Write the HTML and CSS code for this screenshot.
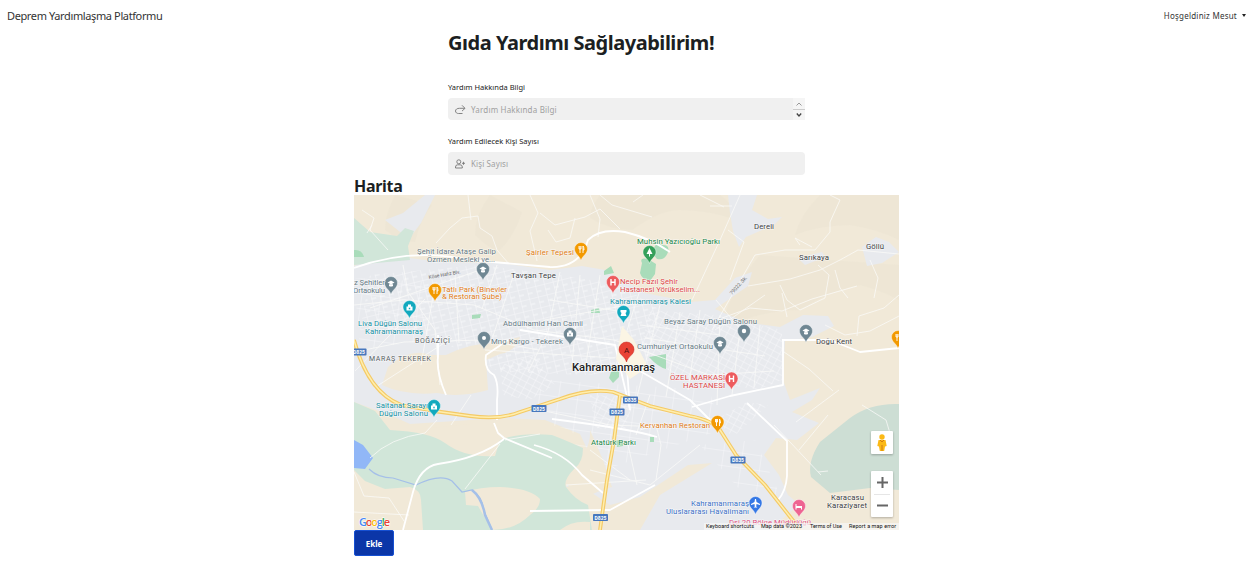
FILE: index.html
```html
<!DOCTYPE html>
<html lang="tr">
<head>
<meta charset="utf-8">
<title>Deprem Yardımlaşma Platformu</title>
<link rel="stylesheet" href="styles.css">
</head>
<body>
<header class="navbar">
  <a class="brand">Deprem Yardımlaşma Platformu</a>
  <a class="user">Hoşgeldiniz Mesut<span class="caret"></span></a>
</header>
<main>
  <form class="form">
    <h1>Gıda Yardımı Sağlayabilirim!</h1>
    <label>Yardım Hakkında Bilgi</label>
    <div class="field first">
      <svg class="icon" viewBox="0 0 12 12"><path d="M10.800 5.300H5.500C3.200 5.300 1.500 6.300 1.500 8s1.500 2.500 3 2.500H8.500M8 2.300l3 3-3 2.800"/></svg>
      <span class="placeholder">Yardım Hakkında Bilgi</span>
      <span class="spin"><svg viewBox="0 0 12 22"><path class="up" d="M3.500 7.500L6 5l2.500 2.500"/><path class="rule" d="M0 11.500h12"/><path class="down" d="M3.800 15.500L6 18l2.200-2.500"/></svg></span>
    </div>
    <label>Yardım Edilecek Kişi Sayısı</label>
    <div class="field second">
      <svg class="icon" viewBox="0 0 12 12"><circle cx="4.800" cy="3.800" r="2"/><path d="M1.500 10V9a2.200 2.200 0 0 1 2.200-2.200h2.400A2.200 2.200 0 0 1 8.300 9v1zM9.500 3.800v3M8 5.300h3"/></svg>
      <span class="placeholder short">Kişi Sayısı</span>
    </div>
  </form>
  <section class="map-section">
    <h2>Harita</h2>
    <svg class="map" viewBox="354 195 545 335">
      <defs>
        <pattern id="blocks-a" width="9" height="11" patternUnits="userSpaceOnUse" patternTransform="rotate(-14)"><path d="M0 0H9M0 0V11M0 6H5" class="street"/></pattern>
        <pattern id="blocks-b" width="7" height="6" patternUnits="userSpaceOnUse" patternTransform="rotate(28)"><path d="M0 0H7M0 0V6" class="street"/></pattern>
        <pattern id="blocks-c" width="19" height="15" patternUnits="userSpaceOnUse" patternTransform="rotate(8)"><path d="M0 0H19M0 0V15" class="street"/></pattern>
        <path id="pin" d="M0 10.500C-1 6-6.500 4-6.500-1a6.500 6.500 0 0 1 13 0C6.500 4 1 6 0 10.500z"/>
        <g id="cap"><path d="M-3.500-1.500L0-3.500l3.500 2L0 .500zM-2 .200V2Q0 3 2 2V.200" class="glyph"/></g>
        <g id="fork"><path d="M-2-4V-1h2V-4M-1-4V3M2-4V3M2-4Q3-3 3 0H2" class="glyph-line"/></g>
        <path id="hospital" d="M-2-4V2.500M2-4V2.500M-2-.7H2" class="glyph-h"/>
        <g id="hall"><path d="M-3 2.500V-1.500L-1.500-1.500V-3.500h3v2H3v4z" class="glyph"/><circle cy=".5" r="1"/></g>
        <rect id="shield" x="-7.500" y="-3.500" width="15" height="7" rx=".8" class="shield"/>
      </defs>
      <rect x="354" y="195" width="545" height="335" class="land"/>
      <path class="relief" d="M395 195Q385 215 385 230 400 242 415 242 420 220 432 205zM490 195Q475 215 475 235 490 250 500 250 515 235 522 212zM600 195Q590 208 590 218 610 230 632 230 660 210 680 210 710 210 735 220 735 205 720 195zM820 195Q800 215 795 235 820 225 850 225 880 230 899 240V195zM760 255Q730 290 720 330 760 310 800 310 830 290 860 285 880 290 899 300V265L830 260z"/>
      <path class="urban" d="M354 266Q382 252 410 258L440 262 500 263 550 270 582 266 605 270 632 285 645 293 690 302 715 300 735 278 752 272 748 286 715 309 745 322 780 327 803 315 828 316 834 326 812 337 785 341 783 380 790 400 820 388 812 400 792 412 819 423 797 440 776 438 764 455 779 475 788 495 800 505 790 512 770 530H640L660 495 712 463 688 465 640 497 610 505 580 485 566 487 590 455 580 434 545 420 500 418 410 424 390 415 354 402z"/>
      <path class="urban" d="M728 195h29l-5 15 16 9 14-2-8 8-28 12-7 10-6-16-3-18zM862 247l14-10 13 5 10 10-17 11-15 3zM798 258l24-6 3 5-20 8zM385 220l18-7 22-18h10l-14 28-12 16z"/>
      <path fill="url(#blocks-a)" d="M370 275L480 265 560 275 620 285 660 310 650 365 590 375 500 372 430 335 360 330z"/>
      <path fill="url(#blocks-b)" d="M650 310L715 315 782 330V380L758 390 675 375 640 350zM500 365L535 355 555 385 530 400 503 395zM590 395L635 397 625 430 595 428zM715 420L747 402 768 405 733 437z"/>
      <path fill="url(#blocks-c)" d="M354 278L430 282 428 340 360 350zM545 380L710 390 720 430 590 475 535 400zM700 445L755 440 780 495 740 490z"/>
      <path class="land" d="M388 367Q410 347 430 355L446 355Q470 343 495 343L520 337Q515 352 500 354L486 360 488 390Q460 398 437 393 405 396 382 385zM396 422L430 428 470 424H545Q575 428 578 440 560 455 540 450L490 455 460 454Q430 440 416 432zM590 430Q592 450 566 479 570 495 580 500 600 490 612 487L603 460z"/>
      <path class="forest" d="M354 402L375 411 390 430Q430 432 445 443 465 458 495 456L500 440Q520 432 552 435 565 440 583 448 583 462 575 468 563 480 566 487 575 500 588 505L592 530H354z"/>
      <path class="land" d="M354 470L365 481 385 489 410 487Q421 490 421 500L423 530H354zM465 492Q480 487 500 487 530 488 540 499 540 508 530 515 515 530 492 530L478 506 466 505zM560 530q12-10 30-8v8z"/>
      <path class="forest dark" d="M899 404Q870 403 850 418L820 442Q807 462 811 477L830 493 870 488 899 490z"/>
      <path class="forest" d="M354 218L370 232 397 236 405 228 414 231 408 246 410 260 354 265z"/>
      <path class="park" d="M354 250q8-1 10 7h-10zM654 248q2-6 9-3 7 0 5 7-3 9-11 7-4-4-3-11zM642 263q-3-6 6-4l8 5-1 10-5 7q-8-1-10-8zM604 271l7-5 3 7-10 2zM649 357l17-3v15q-8-2-17-12zM611 372l8-3v8l-6 6-4-5zM616 440l7 1v5l-6 1zM591 310l8-2 1 5h-9zM472 315l9-1-1 4-8 1zM650 437h4v5h-4z"/>
      <path class="water" d="M354 440l9 5 10 13-8 11-11-1z"/>
      <path class="river" d="M369 469Q378 478 393 478L416 485Q440 473 452 481L462 492 472 490Q482 496 484 511L492 530"/>
      <path class="river wide" d="M472 490Q482 498 485 515L492 530"/>
      <g class="roads thin">
        <path d="M362 210l12 8-4 12 18 20M372 225l-5 8M436 243l14-15 12-10 16-2 2 12 12 8 5 14 12 14M468 195l3 25M530 195l8 18-8 18 7 30M540 213l15 12 30-8 15-8 20 20M548 230l8 12 14-4 5-20M590 195l10 24-2 18M643 195l-10 7M600 195l12 10 40 12M710 206h22M700 195l24 12M740 195L720 240 692 300M712 330L755 255 785 250 815 250 830 232V222L840 200M728 230l16 12-14 38M812 247L795 238 800 245M765 295L715 330M748 286L790 279 820 270 840 260 858 250 899 254M780 285L787 300 800 310 825 298 829 275 818 265M835 270l5 18 8 10M870 260l8 18-4 20M899 295l-15 13-25 8-2 20"/>
        <path d="M722 318l28-10 32 3 30-12 45-13M787 317l-5-24M825 325l20 10 25-4 29-15M784 352l25 17 24 22M839 390l-43 32M799 450l29-35M774 425l47 50M716 300l25 30M354 305l50-5 70 5 60 25 80 10 95 35 65-4M354 352l50-10 80-2 55 10M403 265l5 27 27 38 5 55M435 285l-14 80M455 273l4 70M497 265l-15 44M515 271l-22 65M560 272l-12 60-20 40M580 275l-8 90M600 275l-15 95M640 290l-24 75M660 305L635 405M680 312l-14 85M700 310l-12 80M720 315l-3 90M740 330l-8 65M760 325l-6 62M355 371l70-72M374 388l78-50M480 270l-110 38M640 325l80 10M645 338l120 18M545 320l100-18M550 300l80 13M485 350l130 8M650 395l-14 40M540 410l70 15 55 2M590 450l40 30M627 440l10 45M640 430l16-5 5 20-5 35M590 470l60 15 50-40M354 512l55 3M354 472l10 24 25 2 15 23M500 444l-35 45M471 395l-20 30M566 485l80-5"/>
        <path d="M370 458Q390 438 425 433L437 420M505 440L540 434M830 195l10 5M862 405l24 15 6 20M818 472l10-1"/>
      </g>
      <g class="roads main">
        <path d="M354 268Q410 247 470 260L550 267Q580 268 588 240Q600 228 625 232Q650 238 670 252"/>
        <path d="M438 335v22q-2 15 8 38M508 340l-22 15q-2 15 8 20 5 9 3 25v20M494 423l4 10 6 5 48 20M504 439Q480 458 438 464 420 467 413 492L403 530M640 371L690 400 715 425M783 341V385L730 396 692 407M520 330l95 15 15 65M747 403l40 38v35q-1 15-9 24M625 340l5 70"/>
        <path d="M534 445Q565 453 582 475L603 493M552 419q80 10 105 18M530 511l80-1 45-25M782 340h48l30 12 39-4"/>
      </g>
      <path class="downtown" d="M622 326l12 14 14 27-18 12-14-20z"/>
      <g class="highway-edge"><path d="M354 340Q368 392 401 405L434 411 470 416Q500 420 520 412L560 399Q590 388 613 392L650 406 690 416Q712 420 720 430L736 455 765 485 795 523 800 530M620 395L614 440 607 480 600 530"/></g>
      <g class="highway"><path d="M354 340Q368 392 401 405L434 411 470 416Q500 420 520 412L560 399Q590 388 613 392L650 406 690 416Q712 420 720 430L736 455 765 485 795 523 800 530M620 395L614 440 607 480 600 530"/></g>
      <g class="routes"><use href="#shield" x="359" y="352"/><text x="359" y="354">D825</text><use href="#shield" x="539" y="408.500"/><text x="539" y="410.500">D825</text><use href="#shield" x="630.500" y="400"/><text x="630.500" y="402">D835</text><use href="#shield" x="617" y="412"/><text x="617" y="414">D825</text><use href="#shield" x="738" y="460"/><text x="738" y="462">D835</text><use href="#shield" x="600.500" y="517.500"/><text x="600.500" y="519.500">D825</text></g>
      <g class="pins gray">
        <use href="#pin" x="483" y="270"/><use href="#cap" x="483" y="270"/>
        <use href="#pin" x="391" y="284"/><use href="#cap" x="391" y="284"/>
        <use href="#pin" x="484" y="339"/><circle cx="484" cy="338" r="2" class="glyph"/>
        <use href="#pin" x="570" y="335"/><use href="#hall" x="570" y="334"/>
        <use href="#pin" x="720" y="344"/><use href="#cap" x="720" y="344"/>
        <use href="#pin" x="744" y="332"/><circle cx="744" cy="331" r="2.200" class="glyph"/>
        <use href="#pin" x="806" y="332"/><use href="#cap" x="806" y="332"/>
      </g>
      <g class="pins orange">
        <use href="#pin" x="581" y="250"/><use href="#fork" x="581" y="250"/>
        <use href="#pin" x="435" y="291"/><use href="#fork" x="435" y="291"/>
        <use href="#pin" x="717.500" y="423"/><use href="#fork" x="717.500" y="423"/>
        <use href="#pin" x="898" y="338"/><use href="#fork" x="898" y="338"/>
      </g>
      <g class="pins teal">
        <use href="#pin" x="409.500" y="308"/><use href="#hall" x="409.500" y="308"/>
        <use href="#pin" x="434" y="407"/><use href="#hall" x="434" y="407"/>
        <use href="#pin" x="623.500" y="313"/><path class="glyph" d="M620.500 310h6v2l-1 1 1 3h-6l1-3-1-1z"/>
      </g>
      <g class="pins green"><use href="#pin" x="649.500" y="253"/><path class="glyph" d="M649.500 248l3 6H650v2.500h-1V254h-2.500z"/></g>
      <g class="pins coral"><use href="#pin" x="613" y="283"/><use href="#hospital" x="613" y="283"/><use href="#pin" x="731.500" y="379.500"/><use href="#hospital" x="731.500" y="379.500"/></g>
      <g class="pins blue"><use href="#pin" x="755.500" y="504"/><path class="glyph" d="M755 499h1l.5 3 3.500 2v1l-3.500-1-.3 2.500 1.200 1h-3.800l1.200-1-.3-2.500-3.500 1v-1l3.500-2z"/></g>
      <g class="pins pink"><use href="#pin" x="799" y="507"/><path class="glyph" d="M795.500 504h1v2h5.500v3.500h-1V508h-4.500v1.500h-1z"/></g>
      <path class="marker" d="M626.500 362C625 356 619 355 619 349.500a7.500 7.500 0 0 1 15 0C634 355 628 356 626.500 362z"/>
      <text class="marker-letter" x="626.500" y="353">A</text>
      <g class="label slate">
        <text x="417" y="254" textLength="79">Şehit İdare Ataşe Galip</text><text x="427" y="262" textLength="68">Özmen Mesleki ve...</text>
        <text x="354" y="285" textLength="31">z Şehitler</text><text x="353" y="293" textLength="32">Ortaokulu</text>
        <text x="503" y="326" textLength="80">Abdülhamid Han Camii</text><text x="491" y="343.500" textLength="72">Mng Kargo - Tekerek</text>
        <text x="664" y="323.500" textLength="93">Beyaz Saray Düğün Salonu</text><text x="637" y="349" textLength="76">Cumhuriyet Ortaokulu</text>
      </g>
      <g class="label orange-text"><text x="526" y="255" textLength="48">Şairler Tepesi</text><text x="442" y="291.500" textLength="65">Tatlı Park (Binevler</text><text x="442" y="299" textLength="60">&amp; Restoran Şube)</text><text x="640" y="428" textLength="70">Kervanhan Restoran</text></g>
      <g class="label teal-text"><text x="358" y="326" textLength="64">Liva Düğün Salonu</text><text x="365" y="334" textLength="58">Kahramanmaraş</text><text x="376" y="408" textLength="52">Saltanat Sarayı</text><text x="379" y="416" textLength="49">Düğün Salonu</text><text x="610" y="304" textLength="81">Kahramanmaraş Kalesi</text></g>
      <g class="label green-text"><text x="637" y="243.500" textLength="83">Muhsin Yazıcıoğlu Parkı</text><text x="591" y="444.500" textLength="45">Atatürk Parkı</text></g>
      <g class="label red-text"><text x="620" y="284" textLength="58">Necip Fazıl Şehir</text><text x="620" y="291.500" textLength="80">Hastanesi Yörükselim...</text><text x="670" y="380" textLength="55">ÖZEL MARKASİ</text><text x="683" y="388" textLength="42">HASTANESİ</text></g>
      <g class="label blue-text"><text x="691" y="505.500" textLength="58">Kahramanmaraş</text><text x="666" y="513.500" textLength="83">Uluslararası Havalimanı</text></g>
      <text class="label pink-text" x="729" y="524.500" textLength="82">Dsi 20.Bölge Müdürlüğü</text>
      <g class="label place"><text x="511" y="278" textLength="45">Tavşan Tepe</text><text x="754" y="229" textLength="20">Dereli</text><text x="799" y="260" textLength="30">Sarıkaya</text><text x="866" y="249" textLength="18">Göllü</text><text x="816" y="344" textLength="36">Doğu Kent</text><text x="831" y="500" textLength="33">Karacasu</text><text x="827" y="508" textLength="40">Karaziyaret</text></g>
      <g class="label district"><text x="415" y="343" textLength="35">BOĞAZİÇİ</text><text x="369" y="361" textLength="62">MARAŞ TEKEREK</text></g>
      <text class="city" x="572" y="371" textLength="83" lengthAdjust="spacingAndGlyphs">Kahramanmaraş</text>
      <text class="road-name" transform="translate(429 279) rotate(-10)" textLength="32">Köse Hafız Blv.</text><text class="road-name" transform="translate(732 295) rotate(-48)" textLength="23">79022. Sk.</text>
      <rect x="704" y="523" width="195" height="7" class="credit-bg"/>
      <g class="credit"><text x="706" y="528" textLength="48">Keyboard shortcuts</text><text x="761" y="528" textLength="41">Map data ©2023</text><text x="810" y="528" textLength="32">Terms of Use</text><text x="849" y="528" textLength="47">Report a map error</text></g>
      <text class="google" x="359" y="526" textLength="31"><tspan fill="#4285f4">G</tspan><tspan fill="#ea4335">o</tspan><tspan fill="#fbbc04">o</tspan><tspan fill="#4285f4">g</tspan><tspan fill="#34a853">l</tspan><tspan fill="#ea4335">e</tspan></text>
      <g class="control"><rect x="871" y="431" width="22" height="23" rx="1"/><rect x="871" y="471" width="22" height="46" rx="1"/></g>
      <path d="M874 494.500h16" stroke="#e6e6e6"/><path d="M877 482.500h11M882.500 477v11M877 505.500h11" stroke="#666" stroke-width="2"/>
      <g fill="#fbb916"><circle cx="882" cy="437" r="2.700"/><path d="M878.500 440h7l1.200 6-1.700.5-.8 4.500h-4.400l-.8-4.500-1.700-.5z"/></g><path d="M880 440l2 2 2-2M882 445v6" stroke="#d17b12" fill="none"/>
    </svg>
    <button class="submit" type="button">Ekle</button>
  </section>
</main>
</body>
</html>
```
FILE: styles.css
```css
* { box-sizing: border-box; }
body { margin: 0; background: #fff; color: #1c1f22; font-family: "Noto Sans", "Open Sans", sans-serif; }
.navbar { height: 32px; padding: 0 7px 2px; display: flex; align-items: center; justify-content: space-between; }
.brand { font-size: 11px; color: #333; letter-spacing: -.38px; }
.user { font-size: 8px; color: #333; letter-spacing: .23px; display: flex; align-items: center; gap: 5px; }
.caret { border: 2.5px solid transparent; border-top: 3px solid #222; border-bottom: 0; }
.form { width: 357px; margin-left: 448px; display: flex; flex-direction: column; }
h1 { margin: 0; font-size: 20px; line-height: 22px; height: 50px; letter-spacing: -.47px; white-space: nowrap; }
label { font-size: 7.500px; line-height: 10px; height: 16px; white-space: nowrap; color: #222; }
.field { display: flex; align-items: center; gap: 5px; padding-left: 6px; background: #f0f0f0; border-radius: 4px; color: #a0a0a0; font-size: 8px; }
.placeholder { letter-spacing: .18px; }
.short { letter-spacing: .12px; }
.first { height: 22px; margin-bottom: 16px; }
.second { height: 23px; }
.icon { width: 12px; height: 12px; fill: none; stroke: #777; stroke-width: .9; }
.spin { margin-left: auto; width: 12px; height: 22px; display: flex; background: #f5f5f5; }
.spin svg { width: 12px; height: 22px; fill: none; }
.up { stroke: #999; }
.down { stroke: #444; stroke-width: 1.3; }
.rule { stroke: #ccc; }
.map-section { width: 545px; margin-left: 354px; display: flex; flex-direction: column; align-items: flex-start; }
h2 { margin: 0; height: 20px; font-size: 16px; line-height: 22px; letter-spacing: -.3px; }
.map { width: 545px; height: 335px; overflow: hidden; display: block; font-family: Roboto, sans-serif; }
.submit { width: 40px; height: 26px; padding: 0; border: 1px solid #1650d2; border-radius: 2px; background: #0b36a8; color: #fff; font: bold 8px "Noto Sans", sans-serif; }
.land { fill: #f1e9d8; }
.relief { fill: #e9e3d2; opacity: .35; }
.urban { fill: #e8eaee; }
.street { fill: none; stroke: #f8f9fb; stroke-width: .9; }
.forest { fill: #d1e6d9; }
.dark { fill: #cdded4; }
.park { fill: #a9dcba; }
.water { fill: #91b7f7; }
.river { fill: none; stroke: #a5c0e8; stroke-width: 1.2; }
.wide { stroke-width: 2.500; }
.roads { fill: none; stroke: #fbfbf8; stroke-linejoin: round; }
.thin { stroke-width: .9; opacity: .85; }
.main { stroke: #fff; stroke-width: 1.8; }
.downtown { fill: #fbf5e4; }
.highway-edge { fill: none; stroke: #f4ca66; stroke-width: 3.8; stroke-linejoin: round; }
.highway { fill: none; stroke: #ffeead; stroke-width: 1.5; stroke-linejoin: round; }
.shield { fill: #4777bd; }
.routes text { fill: #fff; font-size: 5px; font-weight: bold; text-anchor: middle; }
.pins { stroke: #fff; stroke-width: .4; }
.gray { fill: #6f8793; }
.orange { fill: #f29900; }
.teal { fill: #12a9be; }
.green { fill: #34a05a; }
.coral { fill: #ed5b5d; }
.blue { fill: #3578e5; }
.pink { fill: #ee6492; }
.glyph { fill: #fff; stroke: none; }
.glyph-line { fill: none; stroke: #fff; stroke-width: .9; }
.glyph-h { fill: none; stroke: #fff; stroke-width: 1.4; }
.marker { fill: #e94335; stroke: #c5221f; stroke-width: .5; }
.marker-letter { font-size: 8px; text-anchor: middle; fill: #4a1010; }
.label { font-size: 7.800px; paint-order: stroke; stroke: #fff; stroke-width: 1px; stroke-opacity: .7; }
.slate { fill: #657984; }
.orange-text { fill: #df7b16; }
.teal-text { fill: #128fa3; }
.green-text { fill: #188546; }
.red-text { fill: #dc4547; }
.blue-text { fill: #3b71c6; }
.pink-text { fill: #dd4f7e; }
.place { fill: #3c4043; }
.district { fill: #555b61; font-size: 7px; }
.city { font-size: 11.500px; font-weight: 500; fill: #222; paint-order: stroke; stroke: #fff; stroke-width: 1px; }
.road-name { font-size: 5px; fill: #666; }
.credit-bg { fill: #f5f5f5; opacity: .75; }
.credit { font-size: 5.500px; fill: #111; }
.google { font-family: "Open Sans", sans-serif; font-size: 11px; font-weight: 600; paint-order: stroke; stroke: #fff; stroke-width: 1px; }
.control { fill: #fff; filter: drop-shadow(0 1px 1px #0004); }
```
